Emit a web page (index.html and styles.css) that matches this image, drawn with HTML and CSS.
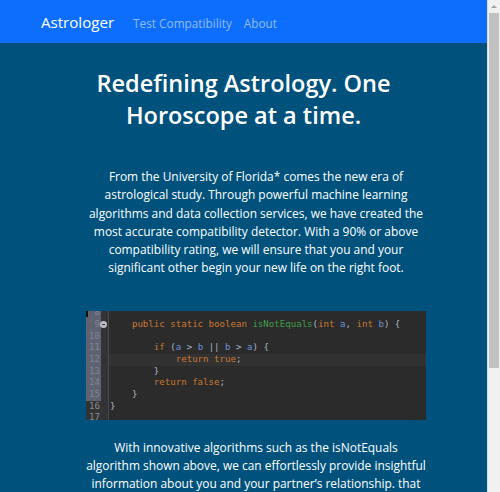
FILE: index.html
```html
<!DOCTYPE html>
<html lang="en">
<head>
<meta charset="utf-8">
<title>Astrologer</title>
<link rel="stylesheet" href="styles.css">
</head>
<body>
<nav class="navbar">
  <a class="brand" href="#">Astrologer</a>
  <ul class="nav-links">
    <li><a class="nav-link" href="#">Test Compatibility</a></li>
    <li><a class="nav-link" href="#">About</a></li>
  </ul>
</nav>
<main class="page">
  <h1 class="title">Redefining Astrology. One Horoscope at a time.</h1>
  <section class="content">
    <p class="lead">From the University of Florida* comes the new era of astrological study. Through powerful machine learning algorithms and data collection services, we have created the most accurate compatibility detector. With a 90% or above compatibility rating, we will ensure that you and your significant other begin your new life on the right foot.</p>
    <div class="code">
      <div class="row first"><span class="num sel"><span class="mark"></span>8</span><span class="fold"></span><span class="line"> </span></div>
      <div class="row"><span class="num sel">9</span><span class="fold"><span class="fold-icon"></span></span><span class="line">    <span class="kw">public static boolean</span> <span class="fn">isNotEquals</span><span class="pn">(</span><span class="kw">int</span> <span class="var">a</span><span class="pn">,</span> <span class="kw">int</span> <span class="var">b</span><span class="pn">) {</span></span></div>
      <div class="row"><span class="num sel">10</span><span class="fold"></span><span class="line"> </span></div>
      <div class="row"><span class="num sel">11</span><span class="fold"></span><span class="line">        <span class="kw">if</span> <span class="pn">(</span><span class="var">a</span> <span class="pn">&gt;</span> <span class="var">b</span> <span class="pn">||</span> <span class="var">b</span> <span class="pn">&gt;</span> <span class="var">a</span><span class="pn">) {</span></span></div>
      <div class="row"><span class="num sel">12</span><span class="fold"></span><span class="line current">            <span class="kw">return true</span><span class="pn">;</span></span></div>
      <div class="row"><span class="num sel">13</span><span class="fold"></span><span class="line">        <span class="pn">}</span></span></div>
      <div class="row"><span class="num sel">14</span><span class="fold"></span><span class="line">        <span class="kw">return false</span><span class="pn">;</span></span></div>
      <div class="row"><span class="num sel">15</span><span class="fold"></span><span class="line">    <span class="pn">}</span></span></div>
      <div class="row"><span class="num">16</span><span class="fold"></span><span class="line"><span class="pn">}</span></span></div>
      <div class="row"><span class="num">17</span><span class="fold"></span><span class="line"> </span></div>
    </div>
    <p class="lead after">With innovative algorithms such as the isNotEquals algorithm shown above, we can effortlessly provide insightful information about you and your partner’s relationship. that no other service can offer. Take the test today and discover whether the stars have aligned for the two of you.</p>
  </section>
</main>
<div class="scrollbar" aria-hidden="true">
  <span class="sb-up"></span>
  <span class="sb-thumb"></span>
</div>
</body>
</html>
```
FILE: styles.css
```css
html, body {
  margin: 0;
  padding: 0;
}

body {
  padding-right: 13px;
  background: #00527d;
  color: #ffffff;
  font-family: "Open Sans", "Noto Sans", "Liberation Sans", sans-serif;
}

.scrollbar {
  position: fixed;
  top: 0;
  right: 0;
  bottom: 0;
  width: 13px;
  box-sizing: border-box;
  display: flex;
  flex-direction: column;
  align-items: center;
  background: #f1f1f1;
  border-left: 1px solid #dcdcdc;
}

.sb-up {
  width: 0;
  height: 0;
  margin: 5px 0 5px;
  border-left: 3px solid transparent;
  border-right: 3px solid transparent;
  border-bottom: 3px solid #a3a3a3;
}

.sb-thumb {
  width: 10px;
  height: 355px;
  background: #c1c1c1;
}

.navbar {
  display: flex;
  align-items: center;
  height: 43px;
  padding-left: 41px;
  background: #0d6efd;
}

.brand {
  font-size: 15.1px;
  color: #ffffff;
  text-decoration: none;
  margin-right: 19px;
}

.nav-links {
  display: flex;
  gap: 12px;
  list-style: none;
  margin: 0;
  padding: 0;
}

.nav-link {
  font-size: 11.8px;
  color: rgba(255, 255, 255, 0.55);
  text-decoration: none;
}

.page {
  padding: 25px 0 110px;
}

.title {
  max-width: 320px;
  margin: 0 auto;
  font-size: 23.5px;
  font-weight: 600;
  line-height: 31.5px;
  text-align: center;
}

.content {
  width: 340px;
  margin: 37px 0 0 86px;
}

.lead {
  margin: 0;
  font-size: 11.95px;
  line-height: 18.3px;
  text-align: center;
}

.lead.after {
  margin-top: 19px;
}

.code {
  margin: 33px 0 0;
  height: 109px;
  overflow: hidden;
  background: #2b2b2b;
  font-family: "DejaVu Sans Mono", "Liberation Mono", monospace;
  font-size: 9.1px;
}

.row {
  display: flex;
  height: 11.7px;
  line-height: 11.7px;
}

.row.first {
  margin-top: -3.6px;
}

.num {
  position: relative;
  width: 15px;
  padding-right: 1px;
  box-sizing: border-box;
  text-align: right;
  color: #8c8c8c;
  background: #313335;
}

.num.sel {
  background: #5f6271;
  color: #80839a;
}

.mark {
  position: absolute;
  left: 0;
  top: 3.6px;
  width: 2px;
  height: 6px;
  background: #111111;
}

.fold {
  position: relative;
  width: 7px;
  background: #313335;
  border-right: 1px solid #4a4a4a;
}

.fold-icon {
  position: absolute;
  left: -1px;
  top: 2px;
  width: 7px;
  height: 7px;
  border-radius: 50%;
  background: #b9bcc4;
}

.fold-icon::after {
  content: "";
  position: absolute;
  left: 2px;
  top: 3px;
  width: 3px;
  height: 1px;
  background: #3a3a3a;
}

.line {
  flex: 1;
  padding-left: 1px;
  white-space: pre;
  color: #a9b7c6;
}

.line.current {
  background: #323232;
}

.kw {
  color: #cc7832;
}

.fn {
  color: #3f9f4a;
}

.var {
  color: #6a93d4;
}

.pn {
  color: #a9b7c6;
}
```
